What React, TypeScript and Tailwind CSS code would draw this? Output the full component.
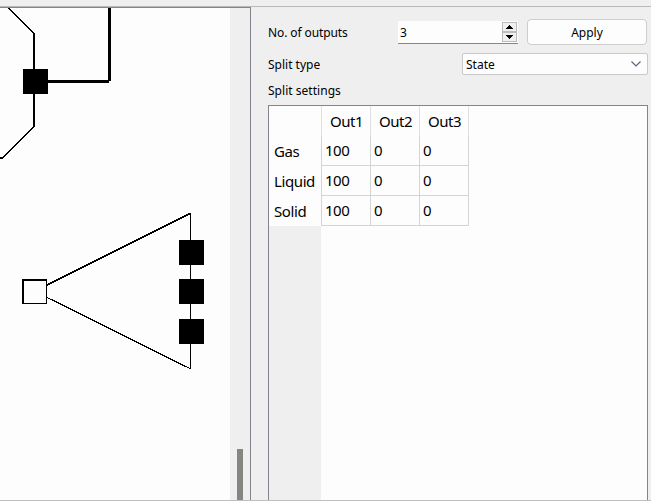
import React from "react";

const rows = ["Gas", "Liquid", "Solid"];
const columns = ["Out1", "Out2", "Out3"];
const values = ["100", "0", "0"];

function Diagram() {
  return (
    <svg width="230" height="492" viewBox="0 8 230 492" fill="none" stroke="#000" shapeRendering="crispEdges" className="shrink-0 bg-[#fdfdfd]">
      <path d="M8.5 8 L33.5 33" strokeWidth="1.3" />
      <path d="M34 33 V127" strokeWidth="2" />
      <path d="M33.5 127 L2.5 158" strokeWidth="1.3" />
      <path d="M0 158 H3" strokeWidth="2" />
      <path d="M46 81.5 H109" strokeWidth="3" />
      <path d="M109.5 8 V81" strokeWidth="3" />
      <rect x="23" y="69" width="25" height="25" fill="#000" stroke="none" />
      <path d="M46 285.5 L190 213.5" strokeWidth="1.8" />
      <path d="M46 297 L190 368.5" strokeWidth="1.3" />
      <path d="M190.5 213 V369" strokeWidth="1" />
      <rect x="22" y="279" width="25" height="25" fill="#000" stroke="none" />
      <rect x="24" y="281" width="22" height="22" fill="#fdfdfd" stroke="none" />
      <rect x="179" y="240" width="25" height="25" fill="#000" stroke="none" />
      <rect x="179" y="279" width="25" height="25" fill="#000" stroke="none" />
      <rect x="179" y="319" width="25" height="25" fill="#000" stroke="none" />
    </svg>
  );
}

function StepButton({ up }: { up?: boolean }) {
  return (
    <button className="flex h-[10px] w-[15px] items-center justify-center border border-[#bcbcbc] bg-[#f0f0f0]">
      <svg width="7" height="4" viewBox="0 0 7 4" className="shrink-0" shapeRendering="crispEdges">
        <path d={up ? "M3 0H4V1H5V2H6V3H7V4H0V3H1V2H2V1H3Z" : "M0 0H7V1H6V2H5V3H4V4H3V3H2V2H1V1H0Z"} />
      </svg>
    </button>
  );
}

function SplitTable() {
  return (
    <div className="flex h-[395px] w-[380px] border border-b-0 border-[#82858d] bg-[#fdfdfd] text-[15px] leading-[30px] tracking-[-0.5px]">
      <div className="w-[52px] shrink-0 bg-[#efefef]">
        <div className="h-[120px] bg-[#fdfdfd] pt-[30px]">
          {rows.map((row) => (
            <div key={row} className="h-[30px] pl-[5px] tracking-[-0.4px]">{row}</div>
          ))}
        </div>
      </div>
      <div className="h-[120px] w-[148px] shrink-0">
        <div className="flex h-[30px]">
          {columns.map((column, i) => (
            <div key={column} className={`${i === 0 ? "w-[50px] border-l" : "w-[49px]"} border-r border-[#e0e0e0] pl-[8px]`}>{column}</div>
          ))}
        </div>
        {rows.map((row) => (
          <div key={row} className="flex h-[30px] leading-[28px]">
            {values.map((value, i) => (
              <div key={i} className={`${i === 0 ? "w-[50px] border-l" : "w-[49px]"} border-r border-b border-[#d4d4d4] pl-[3px]`}>{value}</div>
            ))}
          </div>
        ))}
      </div>
    </div>
  );
}

export default function App() {
  return (
    <div className="flex h-[501px] w-[651px] flex-col overflow-hidden bg-[#efefef] font-['Noto_Sans','Open_Sans',sans-serif] text-[12px] text-black">
      <div className="h-[7px] shrink-0 border-b border-[#b9b9b9]" />
      <div className="flex h-[493px] shrink-0">
        <div className="flex w-[251px] shrink-0 border-t border-r border-[#82858d]">
          <Diagram />
          <div className="flex w-[20px] items-end justify-center">
            <div className="h-[51px] w-[6px] bg-[#858582]" />
          </div>
        </div>
        <div className="w-[400px] pt-[11px] pl-[17px]">
          <div className="flex h-[28px] items-center">
            <span className="w-[130px] pt-[2px] tracking-[-0.1px]">No. of outputs</span>
            <div className="flex h-[23px] w-[120px] items-center border-b border-[#85858a] bg-[#fdfdfd]">
              <span className="w-[104px] pt-[2px] pl-[2px]">3</span>
              <div className="flex w-[16px] flex-col pr-px">
                <StepButton up />
                <StepButton />
              </div>
            </div>
            <button className="ml-[9px] h-[26px] w-[120px] rounded-[4px] border border-[#cdcdcd] bg-[#fdfdfd] pt-px leading-[24px]">Apply</button>
          </div>
          <div className="mt-[7px] flex h-[22px] items-center">
            <span className="w-[194px] pt-[2px]">Split type</span>
            <div className="flex h-[22px] w-[186px] items-center justify-between rounded-[2px] border border-[#c9c9c9] bg-[#fdfdfd] pr-[6px] pl-[3px]">
              <span className="pt-[2px]">State</span>
              <svg width="10" height="6" viewBox="0 0 10 6" fill="none" stroke="#62627e" strokeWidth="1.2"><path d="M.5 .5 5 5 9.5 .5" /></svg>
            </div>
          </div>
          <div className="h-[30px] pt-[7px] leading-[18px] tracking-[0.03px]">Split settings</div>
          <SplitTable />
        </div>
      </div>
      <div className="h-px shrink-0 bg-[#bdbdbd]" />
    </div>
  );
}
